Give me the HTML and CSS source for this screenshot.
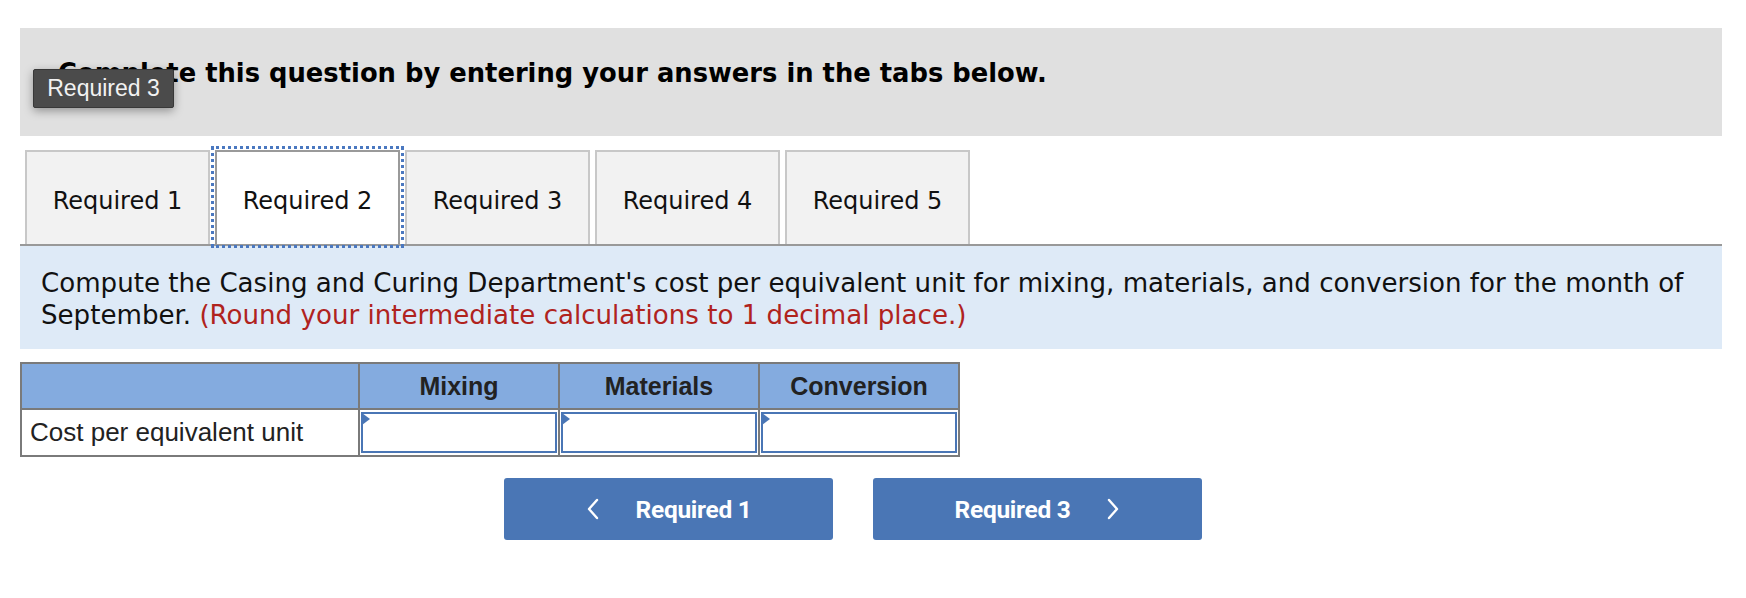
FILE: index.html
```html
<!DOCTYPE html>
<html lang="en">
<head>
<meta charset="utf-8">
<title>Required 2</title>
<link rel="stylesheet" href="styles.css">
</head>
<body>
<div class="page">
  <div class="banner">
    <h1 class="banner-title">Complete this question by entering your answers in the tabs below.</h1>
    <div class="tooltip">Required 3</div>
  </div>

  <div class="tabs">
    <div class="tab">Required 1</div>
    <div class="tab tab-active">Required 2</div>
    <div class="tab">Required 3</div>
    <div class="tab">Required 4</div>
    <div class="tab">Required 5</div>
  </div>

  <div class="instructions">
    <p class="instructions-text">Compute the Casing and Curing Department's cost per equivalent unit for mixing, materials, and conversion for the month of September. <span class="hint">(Round your intermediate calculations to 1 decimal place.)</span></p>
  </div>

  <table class="grid">
    <colgroup>
      <col class="col-label">
      <col class="col-value">
      <col class="col-value">
      <col class="col-value">
    </colgroup>
    <thead>
      <tr>
        <th></th>
        <th>Mixing</th>
        <th>Materials</th>
        <th>Conversion</th>
      </tr>
    </thead>
    <tbody>
      <tr>
        <td class="label-cell">Cost per equivalent unit</td>
        <td class="input-cell"><div class="input-box"></div></td>
        <td class="input-cell"><div class="input-box"></div></td>
        <td class="input-cell"><div class="input-box"></div></td>
      </tr>
    </tbody>
  </table>

  <div class="nav">
    <button class="nav-btn" type="button">
      <svg class="chev" width="14" height="22" viewBox="0 0 14 22"><path d="M11 2 L3 11 L11 20" fill="none" stroke="#fff" stroke-width="2.4" stroke-linecap="round" stroke-linejoin="round"/></svg>
      <span>Required 1</span>
    </button>
    <button class="nav-btn" type="button">
      <span>Required 3</span>
      <svg class="chev" width="14" height="22" viewBox="0 0 14 22"><path d="M3 2 L11 11 L3 20" fill="none" stroke="#fff" stroke-width="2.4" stroke-linecap="round" stroke-linejoin="round"/></svg>
    </button>
  </div>
</div>
</body>
</html>
```
FILE: styles.css
```css
html, body {
  background: #ffffff;
}

body {
  margin: 28px 0 0 20px;
  font-family: "DejaVu Sans", Verdana, sans-serif;
  color: #000;
}

.page {
  width: 1702px;
}

/* Banner */
.banner {
  position: relative;
  box-sizing: border-box;
  height: 108px;
  background: #e0e0e0;
  padding: 30px 0 0 38px;
}

.banner-title {
  margin: 0;
  font-size: 25.8px;
  line-height: 30px;
  font-weight: bold;
  color: #000;
}

.tooltip {
  position: absolute;
  left: 13px;
  top: 41px;
  box-sizing: border-box;
  width: 141px;
  height: 39px;
  background: #4b4b4b;
  border: 1px solid #383838;
  border-radius: 2px;
  color: #f2f2f2;
  font-family: "Liberation Sans", Arial, sans-serif;
  font-size: 23px;
  display: flex;
  align-items: center;
  justify-content: center;
  box-shadow: 0 3px 10px rgba(0, 0, 0, 0.35);
}

/* Tabs */
.tabs {
  display: flex;
  gap: 5px;
  margin-top: 14px;
  padding-left: 5px;
  border-bottom: 2px solid #999999;
}

.tab {
  box-sizing: border-box;
  width: 185px;
  height: 94px;
  border: 2px solid #c8c8c8;
  border-bottom: none;
  background: #f2f2f2;
  display: flex;
  align-items: center;
  justify-content: center;
  font-size: 24px;
  color: #111;
  padding-top: 5px;
}

.tab-active {
  background: #ffffff;
  border-color: #9a9a9a;
  outline: 3px dotted #4a78c0;
  outline-offset: 1px;
}

/* Instructions */
.instructions {
  box-sizing: border-box;
  height: 103px;
  background: #deeaf7;
  padding: 21px 18px 0 21px;
}

.instructions-text {
  margin: 0;
  font-size: 26.1px;
  line-height: 32px;
  color: #111;
}

.hint {
  color: #b0231e;
}

/* Table */
.grid {
  margin-top: 13px;
  border-collapse: collapse;
  table-layout: fixed;
  width: 938px;
  border: 2px solid #7a7a7a;
  font-family: "Liberation Sans", Arial, sans-serif;
}

.col-label {
  width: 338px;
}

.col-value {
  width: 200px;
}

.grid th {
  height: 44px;
  padding: 0;
  background: #84abdf;
  border: 2px solid #7a7a7a;
  font-size: 25px;
  font-weight: bold;
  color: #222;
  text-align: center;
}

.grid td {
  height: 43px;
  border: 2px solid #7a7a7a;
  padding: 0;
}

.label-cell {
  font-size: 26px;
  color: #222;
  padding-left: 8px !important;
  text-align: left;
}

.input-cell {
  padding: 1px !important;
}

.input-box {
  position: relative;
  box-sizing: border-box;
  height: 41px;
  border: 2px solid #4a76b5;
  background: #fff;
}

.input-box::before {
  content: "";
  position: absolute;
  left: -1px;
  top: -1px;
  width: 0;
  height: 0;
  border-top: 6px solid transparent;
  border-bottom: 6px solid transparent;
  border-left: 8px solid #4a76b5;
}

/* Nav buttons */
.nav {
  display: flex;
  gap: 40px;
  margin-top: 21px;
  padding-left: 484px;
}

.nav-btn {
  box-sizing: border-box;
  width: 329px;
  height: 62px;
  border: none;
  border-radius: 3px;
  background: #4a76b5;
  color: #fff;
  font-family: Roboto, "Liberation Sans", sans-serif;
  font-weight: bold;
  font-size: 24.5px;
  letter-spacing: -0.3px;
  display: flex;
  align-items: center;
  justify-content: center;
  gap: 36px;
  padding: 0;
}

.chev {
  display: block;
}
```
